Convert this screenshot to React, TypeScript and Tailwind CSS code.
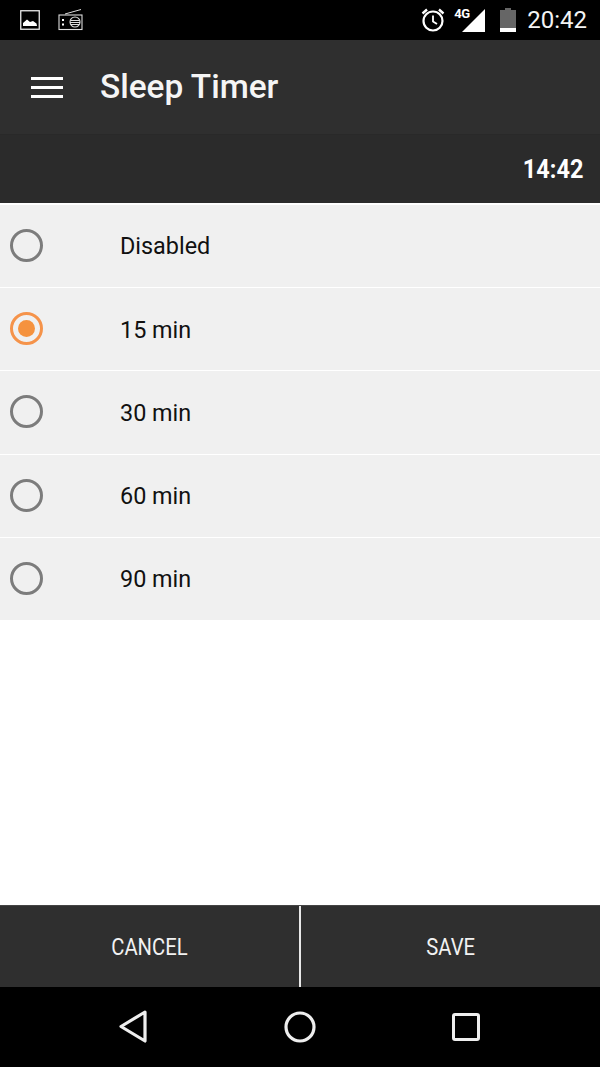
const options = [
  { label: 'Disabled', selected: false },
  { label: '15 min', selected: true },
  { label: '30 min', selected: false },
  { label: '60 min', selected: false },
  { label: '90 min', selected: false },
];

const StatusBar = () => (
  <div className="h-10 bg-black flex items-center text-white shrink-0">
    <svg width="20" height="20" viewBox="0 0 20 20" className="ml-5">
      <rect x="0.75" y="0.75" width="18.5" height="18.5" fill="none" stroke="#e8e8e8" strokeWidth="1.3" />
      <path d="M3 16 L3 13 L7 9.5 L10 12 L13 11 L16.5 13.5 L17 16 Z" fill="#fff" />
    </svg>
    <svg width="26" height="24" viewBox="0 0 26 24" className="ml-[18px]">
      <path d="M7 6 L23 1.5" stroke="#ddd" strokeWidth="1" />
      <rect x="1" y="7" width="23" height="14.5" fill="none" stroke="#ddd" strokeWidth="1.1" />
      <rect x="4" y="11" width="2" height="2" fill="#fff" />
      <rect x="4" y="15.5" width="2" height="2" fill="#fff" />
      <circle cx="17" cy="14" r="5" fill="none" stroke="#ddd" strokeWidth="1.1" />
      <path d="M12.5 12.5 H21.5 M12 14.5 H22 M12.5 16.5 H21.5" stroke="#ddd" strokeWidth="1" />
    </svg>
    <div className="ml-auto flex items-center">
      <svg width="26" height="26" viewBox="0 0 26 26">
        <circle cx="13" cy="14" r="9.5" fill="none" stroke="#fff" strokeWidth="2.2" />
        <path d="M13 8.5 V14.5 L17 17" fill="none" stroke="#fff" strokeWidth="1.8" />
        <path d="M2.5 6.5 L7 2.5 M23.5 6.5 L19 2.5" stroke="#fff" strokeWidth="2.4" />
      </svg>
      <div className="relative w-[26px] h-6 ml-[15px]">
        <span className="absolute left-[-7px] top-[-2px] text-[13px] leading-4 font-bold tracking-[-0.5px]">4G</span>
        <svg width="26" height="24" viewBox="0 0 26 24" className="absolute left-0 top-0">
          <path d="M1 24 L24 1 V24 Z" fill="#fff" />
        </svg>
      </div>
      <svg width="16" height="24" viewBox="0 0 16 24" className="ml-[13px]">
        <path d="M5 0 H11 V2 H16 V24 H0 V2 H5 Z" fill="#666" />
        <rect x="0" y="20" width="16" height="4" fill="#fff" />
      </svg>
      <span className="ml-[11px] mr-[13px] text-[24px] leading-none text-[#f4f4f4]">20:42</span>
    </div>
  </div>
);

const Radio = ({ selected }: { selected: boolean }) => (
  <div
    className={
      selected
        ? 'w-[33px] h-[33px] -mt-px rounded-full border-[3px] border-[#f5934a] flex items-center justify-center'
        : 'w-[33px] h-[33px] -mt-px rounded-full border-[3px] border-[#7c7c7c]'
    }
  >
    {selected && <div className="w-[17px] h-[17px] rounded-full bg-[#f5923e]" />}
  </div>
);

export default function App() {
  return (
    <div className="w-[600px] h-[1067px] flex flex-col bg-white font-['Roboto',sans-serif] overflow-hidden">
      <StatusBar />

      <div className="h-[95px] bg-[#2f2f2f] flex items-center shrink-0 border-b border-[#292929]">
        <div className="ml-[31px] w-8 flex flex-col gap-[6px]">
          <div className="h-[3px] bg-white" />
          <div className="h-[3px] bg-white" />
          <div className="h-[3px] bg-white" />
        </div>
        <h1 className="ml-[37px] text-[33.4px] leading-none font-medium text-[#f5f5f5]">Sleep Timer</h1>
      </div>

      <div className="h-[68px] bg-[#2b2b2b] flex items-center justify-end pr-[17px] shrink-0">
        <span className="text-[25px] leading-none font-bold text-white origin-right scale-x-[0.94]">14:42</span>
      </div>

      <div className="h-[2px] bg-white shrink-0" />

      <div className="shrink-0">
        {options.map((o) => (
          <div key={o.label} className="h-[83.2px] bg-[#f0f0f0] border-b border-white flex items-center pl-[10px]">
            <Radio selected={o.selected} />
            <span className="ml-[77px] mt-[2px] text-[23.4px] leading-none text-[#111]">{o.label}</span>
          </div>
        ))}
      </div>

      <div className="flex-1" />

      <div className="h-[82px] bg-[#2f2f2f] flex shrink-0 border-t border-[#444]">
        <div className="flex-1 flex items-center justify-center">
          <span className="mt-[2px] text-[23px] leading-none text-[#f2f2f2] scale-x-[0.88]">CANCEL</span>
        </div>
        <div className="w-[2px] bg-[#e8e8e8]" />
        <div className="flex-1 flex items-center justify-center">
          <span className="mt-[2px] text-[23px] leading-none text-[#f2f2f2] scale-x-[0.88]">SAVE</span>
        </div>
      </div>

      <div className="h-[80px] bg-black flex items-center shrink-0">
        <svg width="32" height="36" viewBox="0 0 32 36" className="ml-[117px]">
          <path d="M28 3 L4 17.5 L28 32 Z" fill="none" stroke="#eee" strokeWidth="3.2" strokeLinejoin="round" />
        </svg>
        <svg width="32" height="32" viewBox="0 0 32 32" className="ml-[135px]">
          <circle cx="16" cy="16" r="14" fill="none" stroke="#eee" strokeWidth="3.2" />
        </svg>
        <svg width="28" height="28" viewBox="0 0 28 28" className="ml-[136px]">
          <rect x="1.5" y="1.5" width="25" height="25" rx="1.5" fill="none" stroke="#eee" strokeWidth="3" />
        </svg>
      </div>
    </div>
  );
}
